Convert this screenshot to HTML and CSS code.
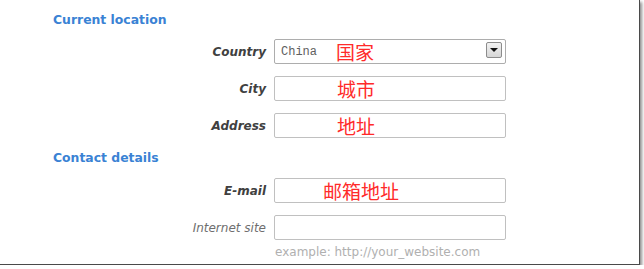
FILE: index.html
```html
<!DOCTYPE html>
<html lang="en">

<head>
    <meta charset="UTF-8">
    <title>Profile form</title>
    <link rel="stylesheet" href="styles.css">
</head>

<body>
    <div class="frame">
        <h2 class="section-title">Current location</h2>
        <div class="fields">
            <div class="row">
                <span class="label">Country</span>
                <div class="input select">
                    <span class="value">China</span>
                    <span class="note note-country">国家</span>
                    <span class="arrow-btn"><span class="arrow"></span></span>
                </div>
            </div>
            <div class="row">
                <span class="label">City</span>
                <div class="input"><span class="note note-city">城市</span></div>
            </div>
            <div class="row">
                <span class="label">Address</span>
                <div class="input"><span class="note note-city">地址</span></div>
            </div>
        </div>

        <h2 class="section-title second">Contact details</h2>
        <div class="fields">
            <div class="row">
                <span class="label">E-mail</span>
                <div class="input"><span class="note note-mail">邮箱地址</span></div>
            </div>
            <div class="row">
                <span class="label optional">Internet site</span>
                <div class="input"></div>
            </div>
        </div>
        <div class="hint">example: http://your_website.com</div>
    </div>
</body>

</html>
```

FILE: styles.css
```css
* {
    margin: 0;
    padding: 0;
    box-sizing: border-box;
}

body {
    background: white;
    font-family: 'DejaVu Sans', Verdana, sans-serif;
}

.frame {
    width: 640px;
    height: 265px;
    background: white;
    border-right: 1px solid #4a4a4a;
    border-bottom: 1px solid #4a4a4a;
    box-shadow: 2px 2px 3px rgba(0, 0, 0, 0.45);
    padding-top: 12px;
}

.section-title {
    font-size: 12.4px;
    line-height: 15px;
    font-weight: bold;
    color: #3a82d4;
    margin: 0 0 12px 53px;
}

.section-title.second {
    margin-top: 12px;
    margin-bottom: 13px;
}

.fields {
    display: flex;
    flex-direction: column;
    gap: 12px;
}

.row {
    display: grid;
    grid-template-columns: 266px 232px;
    column-gap: 8px;
    align-items: center;
}

.label {
    text-align: right;
    font-size: 12px;
    font-weight: bold;
    font-style: italic;
    color: #404040;
}

.label.optional {
    font-weight: normal;
    color: #6e6e6e;
}

.input {
    height: 25px;
    border: 1px solid #c0c0c0;
    border-radius: 2px;
    display: flex;
    align-items: center;
    position: relative;
}

.select {
    border-color: #adadad;
}

.value {
    font-family: 'Liberation Mono', monospace;
    font-size: 12px;
    color: #606060;
    padding-left: 6px;
}

.note {
    font-family: 'Noto Sans CJK SC', sans-serif;
    font-size: 19px;
    line-height: 22px;
    color: #ff2a2a;
}

.note-country {
    margin-left: 19px;
}

.note-city {
    margin-left: 62px;
}

.note-mail {
    margin-left: 48px;
}

.arrow-btn {
    position: absolute;
    right: 3px;
    top: 2px;
    width: 16px;
    height: 16px;
    border: 1px solid #8c8c8c;
    border-radius: 2px;
    background: linear-gradient(#f2f2f2, #d6d6d6);
    display: flex;
    align-items: center;
    justify-content: center;
}

.arrow {
    width: 0;
    height: 0;
    border-left: 4px solid transparent;
    border-right: 4px solid transparent;
    border-top: 4px solid #111;
}

.hint {
    margin: 5px 0 0 275px;
    font-size: 12px;
    line-height: 14px;
    color: #b0b0b0;
}
```
